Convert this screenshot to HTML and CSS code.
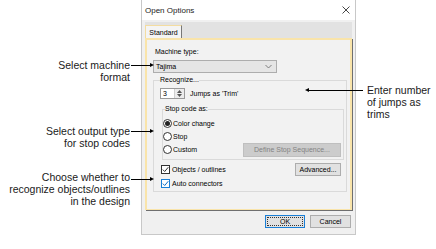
FILE: index.html
```html
<!DOCTYPE html>
<html lang="en">
<head>
  <meta charset="UTF-8">
  <title>Open Options</title>
  <link rel="stylesheet" href="styles.css">
</head>
<body>
  <div class="figure">
    <!-- callouts on the left -->
    <div class="calloutsLeft">
      <div class="callout calloutMachine">Select machine<br>format</div>
      <div class="callout calloutStop">Select output type<br>for stop codes</div>
      <div class="callout calloutObjects">Choose whether to<br>recognize objects/outlines<br>in the design</div>
    </div>

    <!-- the dialog -->
    <div class="dialog">
      <div class="titleBar">
        <span>Open Options</span>
        <svg class="closeIcon" width="8" height="8" viewBox="0 0 8 8">
          <path d="M0.5 0.5 L7.5 7.5 M7.5 0.5 L0.5 7.5" stroke="#333" stroke-width="0.9" fill="none"/>
        </svg>
      </div>

      <div class="tabStrip">
        <div class="tab">Standard</div>
      </div>

      <div class="panel">
        <div class="fieldLabel">Machine type:</div>
        <div class="combo">
          <span>Tajima</span>
          <svg width="7" height="5" viewBox="0 0 7 5">
            <path d="M0.5 1 L3.5 4 L6.5 1" stroke="#666" stroke-width="0.8" fill="none"/>
          </svg>
        </div>

        <fieldset class="group groupRecognize">
          <legend>Recognize...</legend>
          <div class="spinRow">
            <div class="spin">
              <span class="spinValue">3</span>
              <span class="spinButtons">
                <svg width="5" height="3" viewBox="0 0 5 3"><path d="M0 3 L2.5 0 L5 3 Z" fill="#555"/></svg>
                <svg width="5" height="3" viewBox="0 0 5 3"><path d="M0 0 L2.5 3 L5 0 Z" fill="#555"/></svg>
              </span>
            </div>
            <span>Jumps as 'Trim'</span>
          </div>

          <fieldset class="group groupStop">
            <legend>Stop code as:</legend>
            <div class="optionRow">
              <span class="radio checked"></span>Color change
            </div>
            <div class="optionRow">
              <span class="radio"></span>Stop
            </div>
            <div class="optionRow">
              <span class="radio"></span>Custom
              <span class="button disabled defineButton">Define Stop Sequence...</span>
            </div>
          </fieldset>

          <div class="optionRow checkRow firstCheck">
            <span class="checkbox">
              <svg width="7" height="7" viewBox="0 0 7 7"><path d="M0.8 3.6 L2.7 5.5 L6.3 1.2" stroke="#333" stroke-width="1" fill="none"/></svg>
            </span>Objects / outlines
            <span class="button advancedButton">Advanced...</span>
          </div>
          <div class="optionRow checkRow">
            <span class="checkbox blue">
              <svg width="7" height="7" viewBox="0 0 7 7"><path d="M0.8 3.6 L2.7 5.5 L6.3 1.2" stroke="#0f6fc6" stroke-width="1" fill="none"/></svg>
            </span>Auto connectors
          </div>
        </fieldset>
      </div>

      <div class="footer">
        <span class="button okButton"><span class="focusRing">OK</span></span>
        <span class="button cancelButton">Cancel</span>
      </div>
    </div>

    <!-- callout on the right -->
    <div class="calloutsRight">
      <div class="callout calloutJumps">Enter number<br>of jumps as<br>trims</div>
    </div>
  </div>
</body>
</html>
```

FILE: styles.css
```css
body {
  margin: 0;
  background: #fff;
  font-family: "Liberation Sans", Arial, sans-serif;
}
.figure {
  display: flex;
  align-items: flex-start;
}

/* callouts */
.calloutsLeft {
  width: 141px;
  flex-shrink: 0;
}
.calloutsRight {
  flex: 1;
}
.callout {
  position: relative;
  font-size: 10.5px;
  line-height: 12px;
  color: #1a1a1a;
}
.calloutsLeft .callout {
  text-align: right;
  padding-right: 11px;
}
.calloutMachine { margin-top: 59px; }
.calloutStop { margin-top: 42px; }
.calloutObjects { margin-top: 22px; }

/* leader line + arrow head */
.callout::after {
  content: '';
  position: absolute;
  top: 6px;
  border-top: 1px solid #000;
  z-index: 2;
}
.callout::before {
  content: '';
  position: absolute;
  top: 4px;
  border-top: 2.5px solid transparent;
  border-bottom: 2.5px solid transparent;
  z-index: 2;
}
.calloutsLeft .callout::after {
  left: calc(100% - 10px);
  width: 20px;
}
.calloutsLeft .callout::before {
  left: calc(100% + 9px);
  border-left: 4px solid #000;
}
.calloutObjects::after { top: 8px; }
.calloutObjects::before { top: 6px; }

.calloutJumps {
  margin-top: 84px;
  padding-left: 11px;
}
.calloutJumps::after {
  left: -48px;
  width: 55px;
}
.calloutJumps::before {
  left: -51px;
  border-right: 4px solid #000;
}

/* dialog */
.dialog {
  width: 215px;
  height: 235px;
  box-sizing: border-box;
  flex-shrink: 0;
  border: 1px solid #c8c8c8;
  border-top: none;
  background: #f0f0f0;
  display: flex;
  flex-direction: column;
  font-size: 7px;
  color: #000;
}
.titleBar {
  height: 20px;
  background: #fff;
  display: flex;
  align-items: center;
  justify-content: space-between;
  padding: 0 5px 0 3px;
  font-size: 8px;
  color: #222;
}
.tabStrip {
  margin: 2px 3px 0;
  height: 16px;
  background: #e2e2e2;
  display: flex;
  align-items: flex-end;
}
.tab {
  width: 37px;
  height: 13px;
  box-sizing: border-box;
  border: 1px solid #f3dca0;
  border-bottom: none;
  border-right: 1px solid #777;
  background: #f4f4f4;
  display: flex;
  align-items: center;
  justify-content: center;
}
.panel {
  margin: 0 3px;
  height: 172px;
  box-sizing: border-box;
  border: 2px solid #f9e4aa;
  border-bottom-width: 1px;
  box-shadow: 1px 1px 0 #6f6f6f;
  background: #f2f2f2;
  padding: 7px 0 0 6px;
}
.fieldLabel {
  line-height: 10px;
  padding-left: 2px;
}
.combo {
  margin-top: 3px;
  width: 124px;
  height: 13px;
  box-sizing: border-box;
  border: 1px solid #adadad;
  background: #e5e5e5;
  display: flex;
  align-items: center;
  justify-content: space-between;
  padding: 0 4px 0 2px;
}

/* group boxes */
.group {
  margin: 0;
  border: 1px solid #dadada;
  min-inline-size: 0;
}
.group legend {
  padding: 0;
  line-height: 10px;
}
.groupRecognize {
  margin-top: 2px;
  width: 194px;
  box-sizing: border-box;
  padding: 3px 3px 1px 6px;
}
.spinRow {
  display: flex;
  align-items: center;
  gap: 5px;
}
.spin {
  width: 25px;
  height: 11px;
  box-sizing: border-box;
  border: 1px solid #9a9a9a;
  background: #fff;
  display: flex;
}
.spinValue {
  flex: 1;
  line-height: 9px;
  padding-left: 2px;
}
.spinButtons {
  width: 9px;
  border-left: 1px solid #d0d0d0;
  background: #ececec;
  display: flex;
  flex-direction: column;
  align-items: center;
  justify-content: space-around;
}
.groupStop {
  margin: 5px -1px 0 2px;
  padding: 3px 0 3px 0;
}
.groupStop legend {
  margin-left: 2px;
}
.optionRow {
  height: 13px;
  display: flex;
  align-items: center;
}
.radio {
  width: 9px;
  height: 9px;
  box-sizing: border-box;
  border: 1px solid #333;
  border-radius: 50%;
  background: #fff;
  margin-right: 1px;
  display: flex;
  align-items: center;
  justify-content: center;
}
.radio.checked::after {
  content: '';
  width: 5px;
  height: 5px;
  border-radius: 50%;
  background: #222;
}
.checkRow {
  height: 14px;
}
.firstCheck {
  margin-top: 2px;
}
.checkbox {
  width: 9px;
  height: 9px;
  box-sizing: border-box;
  border: 1px solid #333;
  background: #fff;
  margin: 0 2px 0 1px;
  display: flex;
  align-items: center;
  justify-content: center;
}
.checkbox.blue {
  border-color: #1a7fd6;
}

/* buttons */
.button {
  box-sizing: border-box;
  border: 1px solid #adadad;
  background: #e1e1e1;
  display: flex;
  align-items: center;
  justify-content: center;
}
.disabled {
  background: #cccccc;
  border-color: #bfbfbf;
  color: #838383;
}
.defineButton {
  margin-left: auto;
  margin-right: 2px;
  width: 98px;
  height: 14px;
}
.advancedButton {
  margin-left: auto;
  margin-right: 2px;
  width: 46px;
  height: 13px;
}
.footer {
  display: flex;
  justify-content: flex-end;
  gap: 5px;
  padding: 5px 4px 0 0;
}
.okButton {
  width: 40px;
  height: 13px;
  border-color: #1a7fd6;
  padding: 1px;
}
.focusRing {
  flex: 1;
  align-self: stretch;
  border: 1px dotted #333;
  display: flex;
  align-items: center;
  justify-content: center;
}
.cancelButton {
  width: 41px;
  height: 13px;
}
```
